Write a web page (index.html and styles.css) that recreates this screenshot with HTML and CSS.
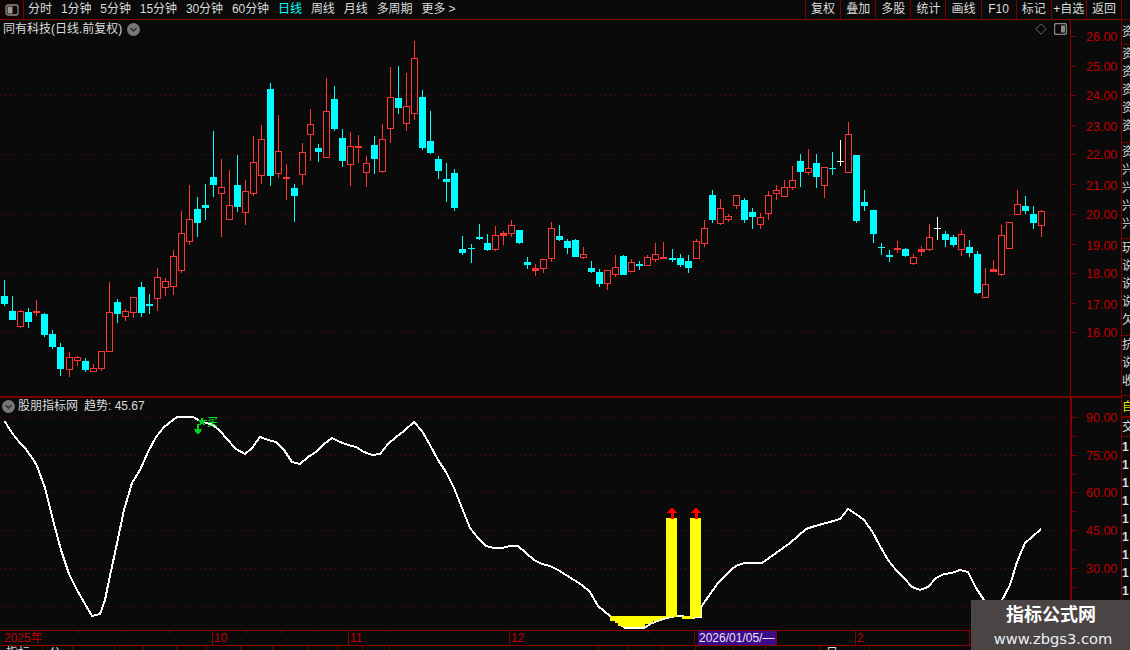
FILE: index.html
```html
<!DOCTYPE html>
<html lang="zh-CN">
<head>
<meta charset="utf-8">
<title>同有科技 日线</title>
<link rel="stylesheet" href="styles.css">
</head>
<body>
<div class="app">
  <header class="toolbar">
    <div class="layout-btn">
      <svg class="layout-icon" width="14" height="12" viewBox="0 0 14 12"><rect x="1" y="1" width="12" height="10" rx="2" class="icon-frame"/><rect x="2.5" y="2.5" width="5" height="7" class="icon-fill"/></svg>
    </div>
    <nav class="periods">
      <span>分时</span><span>1分钟</span><span>5分钟</span><span>15分钟</span><span>30分钟</span><span>60分钟</span><span class="active">日线</span><span>周线</span><span>月线</span><span>多周期</span><span>更多 &gt;</span>
    </nav>
    <nav class="actions">
      <span>复权</span><span>叠加</span><span>多股</span><span>统计</span><span>画线</span><span>F10</span><span>标记</span><span>+自选</span><span>返回</span>
    </nav>
  </header>

  <div class="workspace">
    <main class="charts">
      <section class="panel panel-main">
        <div class="legend legend-main">
          <span>同有科技(日线.前复权)</span>
          <svg class="chevron" width="13" height="13" viewBox="0 0 13 13"><circle cx="6.5" cy="6.5" r="6.5"/><path d="M3.5 5l3 3 3-3"/></svg>
        </div>
        <div class="corner-tools">
          <svg width="12" height="12" viewBox="0 0 12 12"><path class="diamond" d="M6 .8L11.2 6 6 11.2.8 6z"/></svg>
          <svg width="13" height="12" viewBox="0 0 13 12"><rect x=".5" y=".5" width="12" height="11" rx="2" class="icon-frame"/><rect x="7" y="2.5" width="4" height="7" class="icon-fill"/></svg>
        </div>
        <svg class="plot" id="kline" width="1121" height="376" viewBox="0 20 1121 376">
          <g class="grid">
            <path d="M0 95.5H1070M0 154.5H1070M0 214.5H1070M0 273.5H1070M0 332.5H1070"/>
          </g>
          <path class="axis" d="M1070.5 20V396M1071 36.5h5M1071 66.5h5M1071 95.5h5M1071 125.5h5M1071 154.5h5M1071 184.5h5M1071 214.5h5M1071 244.5h5M1071 273.5h5M1071 303.5h5M1071 332.5h5"/>
          <g class="axis-text">
            <text x="1086" y="41">26.00</text><text x="1086" y="71">25.00</text><text x="1086" y="100">24.00</text><text x="1086" y="131">23.00</text><text x="1086" y="159">22.00</text><text x="1086" y="190">21.00</text><text x="1086" y="219">20.00</text><text x="1086" y="250">19.00</text><text x="1086" y="278">18.00</text><text x="1086" y="309">17.00</text><text x="1086" y="337">16.00</text>
          </g>
          <g id="candles"></g>
        </svg>
      </section>

      <section class="panel panel-sub">
        <div class="legend legend-sub">
          <svg class="chevron" width="13" height="13" viewBox="0 0 13 13"><circle cx="6.5" cy="6.5" r="6.5"/><path d="M3.5 5l3 3 3-3"/></svg>
          <span>股朋指标网</span><span class="trend">趋势: 45.67</span>
        </div>
        <svg class="plot" width="1121" height="232" viewBox="0 398 1121 232">
          <g class="grid">
            <path d="M0 417.5H1070M0 455.5H1070M0 492.5H1070M0 530.5H1070M0 568.5H1070M0 606.5H1070"/>
          </g>
          <path class="axis axis-bold" d="M1071 398V630"/>
          <path class="axis" d="M1072 417.5h5M1072 436.5h3M1072 455.5h5M1072 474.5h3M1072 492.5h5M1072 511.5h3M1072 530.5h5M1072 549.5h3M1072 568.5h5M1072 587.5h3M1072 606.5h5"/>
          <polyline class="trend-line" points="4.500,421 12,433 20,443 25,448 33,459 37,466 45,488 53,520 61,550 69,574 77,590 85,604 92,616 100,614 105,600 108,585 116,548 124,510 132,483 140,470 148,452 156,437 164,427 173,420 177,417 193,417 200,421 213,425 220,431 227,439 236,449 245,454 252,448 260,437 268,440 276,442 284,450 292,462 300,464 308,457 316,452 324,444 332,438 340,442 348,445 356,447 364,452 372,455 380,454 388,444 396,437 404,431 414,422 422,431 430,445 438,460 446,472 454,488 462,508 470,528 478,538 486,546 494,548 502,548 510,546 518,546 526,553 534,560 542,564 550,566 558,570 566,575 574,580 582,585 590,592 598,606 610,616 618,622 624,627.500 645,627.500 650,624 660,620 666,618 680,615.500 690,618 701,617 701,607 718,583 733,568 738,565 745,563 762,563 790,543 806,529 815,526 830,522 840,519 848,509 856,514 864,520 872,531 880,546 888,560 896,570 904,578 912,587 920,590 928,587 936,578 944,574 952,573 960,570 968,572 976,588 984,600 992,607 1000,604 1010,585 1017,562 1025,543 1032,537 1041,529"/>
          <path class="bar" d="M610 616H666V518H677V617H666V618H661V620H657V621H653V623H649V624H645V627H623V626H618V623H615V621H610ZM682 616H690V518H701V617H693V619H682Z"/>
          <g class="axis-text">
            <text x="1086" y="422">90.00</text><text x="1086" y="460">75.00</text><text x="1086" y="497">60.00</text><text x="1086" y="535">45.00</text><text x="1086" y="573">30.00</text>
          </g>
          <g class="buy-arrow">
            <path d="M672 507l-5 6h3.500V519h3V513H677zM696 507l-5 6h3.500V519h3V513H701z"/>
          </g>
          <g class="sell-mark">
            <path d="M202 417l1.500 3 3 .5-2.300 2 .6 3-2.800-1.500-2.800 1.500.6-3-2.300-2 3-.5zM197 424h2v4.500h4L198 435l-5-6.500h4z"/>
            <text x="207" y="426">买</text>
          </g>
        </svg>
      </section>

      <section class="time-axis">
        <i class="tick" style="left:79px"></i><i class="tick" style="left:124px"></i><i class="tick" style="left:168px"></i><i class="tick" style="left:247px"></i><i class="tick" style="left:280px"></i><i class="tick" style="left:314px"></i><i class="tick" style="left:388px"></i><i class="tick" style="left:602px"></i><i class="tick" style="left:648px"></i>
        <span class="stamp" style="left:4px">2025年</span>
        <span class="stamp major" style="left:212px">10</span>
        <span class="stamp major" style="left:348px">11</span>
        <span class="stamp major" style="left:509px">12</span>
        <span class="stamp major" style="left:694px"></span>
        <span class="cursor-date">2026/01/05/—</span>
        <span class="stamp major" style="left:855px">2</span>
        <span class="stamp major" style="left:969px"></span>
      </section>

      <footer class="tabs">
        <span style="width:43px">指标</span><span style="width:30px">公</span><span style="width:42px"></span><span style="width:29px"></span><span style="width:33px"></span><span style="width:30px"></span><span style="width:34px"></span><span style="width:32px"></span><span style="width:35px"></span><span style="width:30px"></span><span style="width:25px"></span><span style="width:27px"></span><span style="width:209px"></span><span style="width:29px"></span><span style="width:35px"></span><span style="width:33px"></span><span style="width:38px"></span><span style="width:32px"></span><span style="width:54px"></span><span style="width:50px">日</span>
      </footer>
    </main>

    <aside class="sidebar">
      <div class="side-group g1"><p>资</p></div>
      <div class="side-group g2"><p>资</p><p>资</p><p>资</p><p>资</p><p>资</p></div>
      <div class="side-group g3"><p>资</p><p>兴</p><p>兴</p><p>兴</p><p>兴</p></div>
      <div class="side-group g4"><p>玩</p><p>说</p><p>说</p><p>说</p><p>欠</p></div>
      <div class="side-group g5"><p>抗</p><p>说</p><p>收</p></div>
      <div class="side-group g6"><p>自</p></div>
      <div class="side-group g7"><p>交</p></div>
      <div class="side-group g8"><p>1</p><p>1</p><p>1</p><p>1</p><p>1</p><p>1</p><p>1</p><p>1</p><p>1</p></div>
    </aside>
  </div>

  <div class="watermark">
    <strong>指标公式网</strong>
    <span>www.zbgs3.com</span>
  </div>
</div>
<script src="script.js"></script>
</body>
</html>
```

FILE: styles.css
```css
* { box-sizing: border-box; }
html, body { margin: 0; padding: 0; background: #0a0a0a; }
body { font: 12px/1 "Liberation Sans", "Noto Sans CJK SC", sans-serif; color: #dcdcdc; overflow: hidden; }
.app { position: relative; width: 1130px; height: 650px; overflow: hidden; }

.toolbar { display: flex; height: 20px; border-bottom: 1px solid #7a0000; line-height: 19px; }
.layout-btn { width: 24px; display: flex; align-items: center; justify-content: center; border-right: 1px solid #7a0000; background: #120404; }
.icon-frame { fill: none; stroke: #8a8a8a; stroke-width: 1.3; }
.icon-fill { fill: #8a8a8a; }
.layout-btn .icon-fill { fill: #9a9a9a; }
.periods { display: flex; gap: 9px; padding-left: 4px; letter-spacing: -0.07px; }
.periods .active { color: #00ffff; }
.actions { display: flex; width: 317px; margin-left: auto; margin-right: 8px; }
.actions span { flex: 1; text-align: center; border-left: 1px solid #7a0000; white-space: nowrap; }
.actions span:last-child { border-right: 1px solid #7a0000; }

.workspace { display: flex; height: 630px; }
.charts { width: 1121px; flex: none; }
.panel { position: relative; }
.panel-main { height: 376px; }
.panel-sub { height: 234px; border-top: 2px solid #7a0000; }
.plot { display: block; shape-rendering: crispEdges; }

.legend { position: absolute; display: flex; align-items: center; line-height: 16px; z-index: 1; }
.legend-main { left: 3px; top: 1px; gap: 5px; }
.legend-sub { left: 2px; top: 0; gap: 3px; }
.trend { margin-left: 3px; }
.chevron circle { fill: #777; }
.chevron path { fill: none; stroke: #2a2a2a; stroke-width: 1.3; }
.corner-tools { position: absolute; top: 3px; right: 54px; display: flex; gap: 7px; align-items: center; }
.diamond { fill: none; stroke: #666; }

.grid path { fill: none; stroke: #6a0606; stroke-dasharray: 1 4; }
.axis { fill: none; stroke: #8a0000; }
.axis-bold { stroke-width: 2; }
.axis-text text { fill: #c00000; font: 12.500px "Liberation Sans", sans-serif; shape-rendering: auto; }
.bar { fill: #ffff00; }
.trend-line { fill: none; stroke: #ffffff; stroke-width: 2; stroke-linejoin: round; }
.buy-arrow path { fill: #ff0000; }
.sell-mark path { fill: #00d21e; }
.sell-mark text { fill: #00ff3c; font: 11px "Noto Sans CJK SC", sans-serif; shape-rendering: auto; }

.c-red { fill: #ff3535; }
.c-cyan { fill: #00ffff; }
.c-white { fill: #ffffff; }
.c-hollow { fill: none; stroke: #ff3535; }

.time-axis { position: relative; height: 16px; border-top: 1px solid #8a0000; border-bottom: 1px solid #8a0000; color: #c00000; line-height: 14px; }
.tick { position: absolute; top: 0; width: 1px; height: 2px; background: #8a0000; }
.stamp { position: absolute; top: 0; height: 14px; white-space: nowrap; }
.stamp.major { border-left: 1px solid #8a0000; padding-left: 1px; }
.cursor-date { position: absolute; left: 698px; top: 0; width: 79px; height: 14px; padding-left: 1px; background: #3c0a8c; color: #e6e6e6; border-right: 1px solid #8a0000; white-space: nowrap; }

.tabs { display: flex; height: 4px; overflow: hidden; line-height: 14px; }
.tabs span { flex: none; border-right: 1px solid #7a0000; padding-left: 6px; height: 14px; color: #ddd; }

.sidebar { width: 9px; flex: none; border-left: 1px solid #7a0000; overflow: hidden; }
.side-group { border-bottom: 1px solid #7a0000; overflow: hidden; }
.side-group p { margin: 0; height: 18px; line-height: 18px; font-size: 12px; white-space: nowrap; }
.g1 { height: 25px; padding-top: 3px; }
.g2 { height: 98px; }
.g3 { height: 96px; }
.g4 { height: 97px; }
.g5 { height: 60px; }
.g6 { height: 22px; color: #e6e600; padding-top: 2px; border-bottom: 2px solid #7a0000; }
.g7 { height: 19px; }
.g8 { border: 0; padding-top: 1px; font-weight: bold; }

.watermark { position: absolute; left: 971px; top: 600px; width: 159px; height: 50px; background: #4a4444; color: #fff; display: flex; flex-direction: column; align-items: center; }
.watermark strong { font-size: 18px; line-height: 30px; margin-left: 1px; }
.watermark span { font: 14.700px/18px "DejaVu Sans", sans-serif; color: #e8f0f8; white-space: nowrap; margin-left: 5px; }
```

FILE: script.js
```js
var data = [
["c",296,304,280,306],["c",311,320,296,320],["r",311,327,310,328],["c",312,322,308,328],["r",311,313,300,316],
["c",314,335,313,337],["c",334,347,330,349],["c",347,369,343,376],["r",357,370,352,377],["r",357,361,356,366],
["c",361,370,358,372],["r",368,372,364,372],["r",351,369,351,371],["r",312,352,282,352],["c",302,314,299,323],
["r",311,317,309,321],["r",297,313,297,318],["c",287,313,282,317],["c",304,306,294,314],["r",277,299,268,311],
["r",281,288,278,296],["r",256,287,250,295],["r",233,271,211,273],["r",219,242,185,245],["c",209,223,197,237],
["c",205,208,184,220],["c",177,185,131,197],["r",187,194,159,237],["r",205,220,170,220],["c",185,207,155,212],
["r",191,213,180,225],["r",162,194,136,196],["r",139,176,125,184],["c",89,176,83,186],["r",151,174,115,178],
["r",177,179,164,200],["c",188,196,184,222],["r",152,175,143,185],["r",124,135,109,161],["c",148,152,144,162],
["r",111,158,78,158],["c",99,129,86,131],["c",138,161,129,167],["r",146,165,132,186],["r",146,148,135,163],
["r",163,173,156,187],["c",145,159,136,174],["r",139,172,124,173],["r",97,129,67,143],["c",98,108,66,114],
["r",106,124,73,131],["r",58,114,41,120],["c",97,148,90,150],["c",141,153,111,154],["c",159,171,156,179],
["c",179,182,163,202],["c",173,208,169,211],["c",249,253,236,255],["c",248,249,244,263],["c",237,239,224,240],
["c",243,250,234,251],["r",235,250,226,251],["r",233,236,231,245],["r",225,234,220,237],["c",230,243,230,244],
["c",262,265,257,269],["r",268,271,264,276],["r",259,269,259,273],["r",228,259,222,262],["c",236,240,225,241],
["c",241,248,239,254],["c",240,257,239,257],["r",254,258,247,259],["c",268,272,261,273],["c",272,284,269,287],
["r",270,284,270,290],["r",267,275,255,277],["c",256,275,255,275],["r",262,272,259,272],["c",264,266,261,270],
["r",257,266,255,266],["r",254,260,243,262],["r",257,259,242,259],["c",258,260,249,262],["c",258,265,254,267],
["c",261,268,255,273],["r",241,259,239,259],["r",228,244,220,247],["c",195,220,190,223],["r",208,224,199,225],
["r",216,220,214,222],["r",195,206,195,209],["c",200,220,198,223],["c",212,217,208,229],["r",217,225,213,229],
["r",195,214,191,220],["r",190,194,185,200],["r",187,197,180,197],["r",180,188,166,190],["c",161,172,154,187],
["r",168,173,149,175],["c",163,177,154,188],["r",167,186,167,198],["c",168,169,152,175],["w",161,162,140,166],
["r",134,173,122,173],["c",155,221,155,223],["c",202,206,190,211],["c",210,234,210,243],["c",247,248,243,255],
["c",255,257,250,262],["r",248,250,241,253],["c",249,256,248,257],["r",257,264,254,265],["r",249,252,246,256],
["r",237,250,224,251],["w",228,229,217,240],["c",234,240,231,247],["c",237,245,235,247],["r",234,250,230,256],
["c",247,253,240,257],["c",254,293,251,294],["r",284,298,268,298],["r",269,272,260,272],["r",235,275,225,276],
["r",222,249,222,249],["r",204,215,190,215],["c",206,211,196,214],["c",214,223,206,229],["r",211,226,210,237]
];

var NS = "http://www.w3.org/2000/svg";
var host = document.getElementById("candles");

function rect(x, y, w, h, cls) {
  var node = document.createElementNS(NS, "rect");
  node.setAttribute("x", x);
  node.setAttribute("y", y);
  node.setAttribute("width", w);
  node.setAttribute("height", h);
  node.setAttribute("class", cls);
  host.appendChild(node);
}

data.forEach(function (d, i) {
  var kind = d[0], top = d[1], bot = d[2], wTop = d[3], wBot = d[4];
  var px = Math.round(4.2 + 8.04 * i);
  var solid = kind === "c" ? "c-cyan" : kind === "w" ? "c-white" : "c-red";
  if (top > wTop) rect(px, wTop, 1, top - wTop, solid);
  if (wBot > bot) rect(px, bot, 1, wBot - bot, solid);
  if (kind === "r" && bot - top > 3) {
    rect(px - 3 + 0.5, top + 0.5, 6, bot - top - 1, "c-hollow");
  } else {
    rect(px - 3, top, 7, Math.max(bot - top, 1), solid);
  }
});
```
